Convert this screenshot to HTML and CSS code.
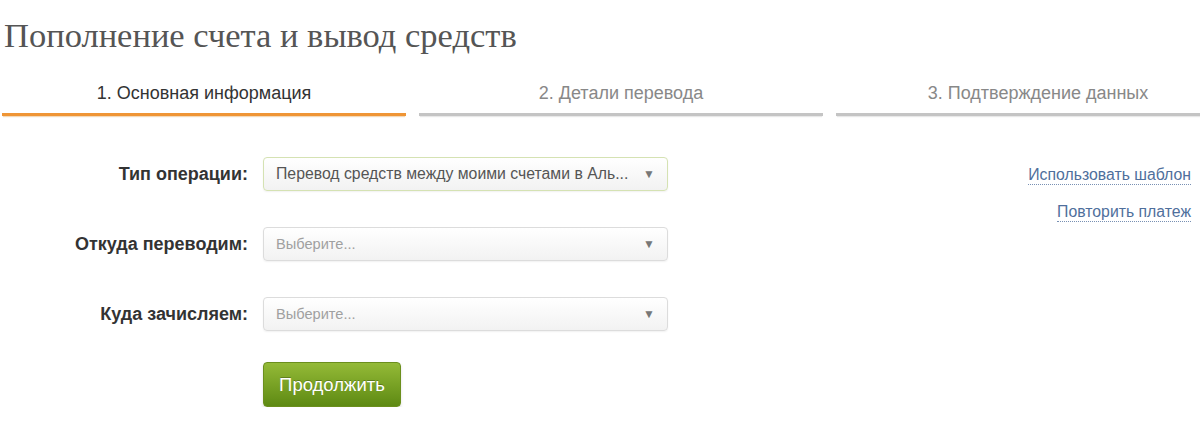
FILE: index.html
```html
<!DOCTYPE html>
<html lang="ru">
<head>
<meta charset="utf-8">
<title>Пополнение счета и вывод средств</title>
<link rel="stylesheet" href="styles.css">
</head>
<body>
<div class="page">
  <h1 class="title">Пополнение счета и вывод средств</h1>
  <div class="tabs">
    <div class="tab tab-active">1. Основная информация</div>
    <div class="tab">2. Детали перевода</div>
    <div class="tab">3. Подтверждение данных</div>
  </div>
  <div class="content">
    <div class="form">
      <div class="row">
        <div class="label">Тип операции:</div>
        <div class="select select-filled">
          <span class="select-text">Перевод средств между моими счетами в Аль...</span>
          <span class="arrow">▼</span>
        </div>
      </div>
      <div class="row">
        <div class="label">Откуда переводим:</div>
        <div class="select">
          <span class="select-text placeholder">Выберите...</span>
          <span class="arrow">▼</span>
        </div>
      </div>
      <div class="row">
        <div class="label">Куда зачисляем:</div>
        <div class="select">
          <span class="select-text placeholder">Выберите...</span>
          <span class="arrow">▼</span>
        </div>
      </div>
      <div class="row row-button">
        <div class="label"></div>
        <button class="btn">Продолжить</button>
      </div>
    </div>
    <div class="links">
      <a class="link" href="#">Использовать шаблон</a>
      <a class="link" href="#">Повторить платеж</a>
    </div>
  </div>
</div>
</body>
</html>
```

FILE: styles.css
```css
html, body {
  margin: 0;
  padding: 0;
  background: #fff;
  overflow: hidden;
}
.page {
  width: 1200px;
  font-family: "Liberation Sans", Arial, sans-serif;
  color: #333;
}
.title {
  margin: 0;
  padding: 16px 0 0 4px;
  font-family: "Liberation Serif", "Times New Roman", serif;
  font-weight: normal;
  font-size: 34.5px;
  line-height: 38px;
  color: #555;
}
.tabs {
  display: flex;
  gap: 13px;
  margin: 20px 0 0 2px;
  width: 1240px;
}
.tab {
  flex: 0 0 404px;
  text-align: center;
  font-size: 18px;
  line-height: 20px;
  color: #888;
  padding: 9px 0 10px;
  border-bottom: 3px solid #c4c4c4;
  box-shadow: 0 2px 1px -1px #e8e8e8;
}
.tab-active {
  color: #333;
  border-bottom-color: #ef9535;
  box-shadow: 0 2px 1px -1px #f4d9b8;
}
.content {
  display: flex;
  align-items: flex-start;
  margin-top: 41px;
}
.form {
  display: flex;
  flex-direction: column;
  gap: 36px;
}
.row {
  display: flex;
  align-items: center;
  gap: 15px;
}
.label {
  width: 248px;
  text-align: right;
  font-weight: bold;
  font-size: 18px;
  color: #333;
}
.select {
  box-sizing: border-box;
  width: 405px;
  height: 34px;
  display: flex;
  align-items: center;
  justify-content: space-between;
  padding: 0 12px 0 12px;
  border: 1px solid #dcdcdc;
  border-radius: 4px;
  background: linear-gradient(#ffffff, #f2f2f2);
  box-shadow: 0 1px 2px rgba(0,0,0,0.06);
}
.select-filled {
  border-color: #d5e2b3;
}
.select-text {
  font-size: 15.8px;
  color: #555;
}
.placeholder {
  font-size: 14.6px;
  color: #a0a0a0;
}
.arrow {
  font-size: 12px;
  color: #777;
}
.row-button {
  margin-top: -5px;
}
.btn {
  box-sizing: border-box;
  width: 138px;
  height: 45px;
  border: 1px solid #6b8f1d;
  border-radius: 4px;
  background: linear-gradient(#94ba37, #5e8a13);
  color: #fff;
  font-family: "Liberation Sans", Arial, sans-serif;
  font-size: 18.5px;
  text-shadow: 0 -1px 0 rgba(0,0,0,0.25);
  box-shadow: 0 2px 3px rgba(0,0,0,0.12);
  cursor: pointer;
}
.links {
  margin-left: auto;
  margin-right: 9px;
  display: flex;
  flex-direction: column;
  align-items: flex-end;
  gap: 17px;
  padding-top: 8px;
}
.link {
  font-size: 15.8px;
  line-height: 19px;
  color: #4f6f9c;
  text-decoration: none;
  border-bottom: 1px dotted #7890b3;
}
```
